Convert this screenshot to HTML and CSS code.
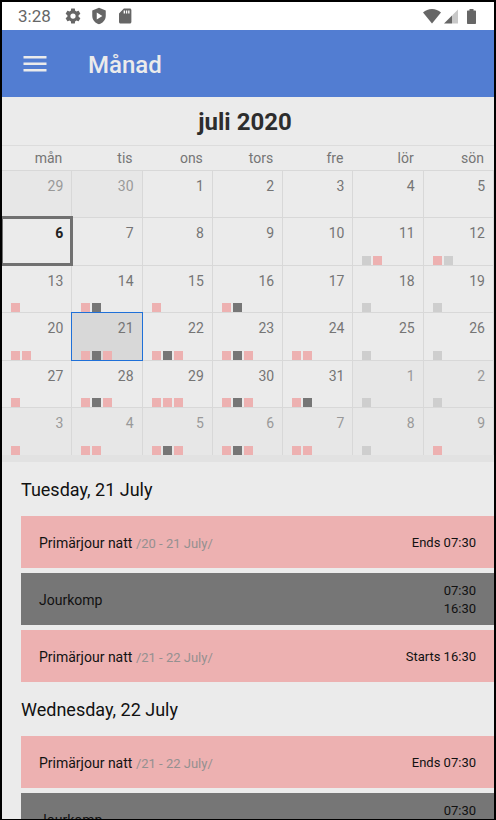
FILE: index.html
```html
<!DOCTYPE html>
<html lang="sv">
<head>
<meta charset="utf-8">
<meta name="viewport" content="width=device-width, initial-scale=1">
<title>Månad</title>
<link rel="stylesheet" href="styles.css">
</head>
<body>
<div class="status">
  <span class="clock">3:28</span>
  <svg class="status-icon" viewBox="0 0 24 24" aria-hidden="true"><path fill-rule="evenodd" d="M19.43 12.98c.04-.32.07-.64.07-.98s-.03-.66-.07-.98l2.11-1.65c.19-.15.24-.42.12-.64l-2-3.46c-.12-.22-.39-.3-.61-.22l-2.49 1c-.52-.4-1.08-.73-1.69-.98l-.38-2.65C14.46 2.18 14.25 2 14 2h-4c-.25 0-.46.18-.49.42l-.38 2.65c-.61.25-1.17.59-1.69.98l-2.49-1c-.23-.09-.49 0-.61.22l-2 3.46c-.13.22-.07.49.12.64l2.11 1.65c-.04.32-.07.65-.07.98s.03.66.07.98l-2.11 1.65c-.19.15-.24.42-.12.64l2 3.46c.12.22.39.3.61.22l2.49-1c.52.4 1.08.73 1.69.98l.38 2.65c.03.24.24.42.49.42h4c.25 0 .46-.18.49-.42l.38-2.65c.61-.25 1.17-.59 1.69-.98l2.49 1c.23.09.49 0 .61-.22l2-3.46c.12-.22.07-.49-.12-.64l-2.11-1.65zM12 15.5a3.5 3.5 0 1 1 0-7 3.5 3.5 0 0 1 0 7z"/></svg>
  <svg class="status-icon" viewBox="0 0 24 24" aria-hidden="true"><path fill-rule="evenodd" d="M12 1 3 4.500v7c0 5.500 3.800 9.700 9 11.500 5.200-1.800 9-6 9-11.500v-7zM9 7.300 16.500 12 9 16.700z"/></svg>
  <svg class="status-icon" viewBox="0 0 24 24" aria-hidden="true"><path fill-rule="evenodd" d="M18.500 2h-8L4 8.500V20c0 1.100.9 2 2 2h12.500c1.100 0 2-.9 2-2V4c0-1.100-.9-2-2-2zM12 8.500h-1.800v-4H12zm3 0h-1.800v-4H15zm3 0h-1.800v-4H18z"/></svg>
  <span class="signals">
    <svg class="wifi" viewBox="0 0 18 15" aria-hidden="true"><path d="M0 3.500C2.500 1.300 5.600 0 9 0s6.500 1.300 9 3.500L9 14.500z"/></svg>
    <svg class="cell" viewBox="0 0 14 15" aria-hidden="true"><path class="faint" d="M8 6.500 14 .5v14H8z"/><path d="M0 14.500 8 6.500v8z"/></svg>
    <svg class="battery" viewBox="0 0 9 15" aria-hidden="true"><path d="M2.500 1.500V0h4v1.500H8c.6 0 1 .4 1 1V14c0 .6-.4 1-1 1H1c-.6 0-1-.4-1-1V2.500c0-.6.4-1 1-1z"/></svg>
  </span>
</div>
<header class="appbar">
  <button class="menu" type="button" aria-label="Meny"><svg viewBox="0 0 24 16" aria-hidden="true"><path d="M.5 0h23v2.500H.5zM.5 6.500h23V9H.5zM.5 13h23v2.500H.5z"/></svg></button>
  <h1>Månad</h1>
</header>
<main class="content">
  <section class="calendar">
    <h2>juli 2020</h2>
    <table>
      <thead><tr><th>mån</th><th>tis</th><th>ons</th><th>tors</th><th>fre</th><th>lör</th><th>sön</th></tr></thead>
      <tbody>
        <tr>
          <td class="other"><button type="button">29</button></td>
          <td class="other"><button type="button">30</button></td>
          <td><button type="button">1</button></td>
          <td><button type="button">2</button></td>
          <td><button type="button">3</button></td>
          <td><button type="button">4</button></td>
          <td><button type="button">5</button></td>
        </tr>
        <tr>
          <td class="today"><button type="button">6</button></td>
          <td><button type="button">7</button></td>
          <td><button type="button">8</button></td>
          <td><button type="button">9</button></td>
          <td><button type="button">10</button></td>
          <td><button type="button">11<span class="dots"><i class="free"></i><i class="duty"></i></span></button></td>
          <td><button type="button">12<span class="dots"><i class="duty"></i><i class="free"></i></span></button></td>
        </tr>
        <tr>
          <td><button type="button">13<span class="dots"><i class="duty"></i></span></button></td>
          <td><button type="button">14<span class="dots"><i class="duty"></i><i class="comp"></i></span></button></td>
          <td><button type="button">15<span class="dots"><i class="duty"></i></span></button></td>
          <td><button type="button">16<span class="dots"><i class="duty"></i><i class="comp"></i></span></button></td>
          <td><button type="button">17</button></td>
          <td><button type="button">18<span class="dots"><i class="free"></i></span></button></td>
          <td><button type="button">19<span class="dots"><i class="free"></i></span></button></td>
        </tr>
        <tr>
          <td><button type="button">20<span class="dots"><i class="duty"></i><i class="duty"></i></span></button></td>
          <td class="selected"><button type="button">21<span class="dots"><i class="duty"></i><i class="comp"></i><i class="duty"></i></span></button></td>
          <td><button type="button">22<span class="dots"><i class="duty"></i><i class="comp"></i><i class="duty"></i></span></button></td>
          <td><button type="button">23<span class="dots"><i class="duty"></i><i class="comp"></i><i class="duty"></i></span></button></td>
          <td><button type="button">24<span class="dots"><i class="duty"></i><i class="duty"></i></span></button></td>
          <td><button type="button">25<span class="dots"><i class="free"></i></span></button></td>
          <td><button type="button">26<span class="dots"><i class="free"></i></span></button></td>
        </tr>
        <tr>
          <td><button type="button">27<span class="dots"><i class="duty"></i></span></button></td>
          <td><button type="button">28<span class="dots"><i class="duty"></i><i class="comp"></i><i class="duty"></i></span></button></td>
          <td><button type="button">29<span class="dots"><i class="duty"></i><i class="duty"></i><i class="duty"></i></span></button></td>
          <td><button type="button">30<span class="dots"><i class="duty"></i><i class="comp"></i><i class="duty"></i></span></button></td>
          <td><button type="button">31<span class="dots"><i class="duty"></i><i class="comp"></i></span></button></td>
          <td class="other"><button type="button">1<span class="dots"><i class="free"></i></span></button></td>
          <td class="other"><button type="button">2<span class="dots"><i class="free"></i></span></button></td>
        </tr>
        <tr>
          <td class="other"><button type="button">3<span class="dots"><i class="duty"></i></span></button></td>
          <td class="other"><button type="button">4<span class="dots"><i class="duty"></i><i class="duty"></i></span></button></td>
          <td class="other"><button type="button">5<span class="dots"><i class="duty"></i><i class="comp"></i><i class="duty"></i></span></button></td>
          <td class="other"><button type="button">6<span class="dots"><i class="duty"></i><i class="comp"></i><i class="duty"></i></span></button></td>
          <td class="other"><button type="button">7<span class="dots"><i class="duty"></i><i class="duty"></i></span></button></td>
          <td class="other"><button type="button">8<span class="dots"><i class="free"></i></span></button></td>
          <td class="other"><button type="button">9<span class="dots"><i class="duty"></i></span></button></td>
        </tr>
      </tbody>
    </table>
  </section>
  <section class="agenda">
    <h3>Tuesday, 21 July</h3>
    <ul>
      <li class="duty"><span class="name">Primärjour natt <small>/20 - 21 July/</small></span><span class="time">Ends 07:30</span></li>
      <li class="comp"><span class="name">Jourkomp</span><span class="time">07:30<br>16:30</span></li>
      <li class="duty"><span class="name">Primärjour natt <small>/21 - 22 July/</small></span><span class="time">Starts 16:30</span></li>
    </ul>
    <h3>Wednesday, 22 July</h3>
    <ul>
      <li class="duty"><span class="name">Primärjour natt <small>/21 - 22 July/</small></span><span class="time">Ends 07:30</span></li>
      <li class="comp"><span class="name">Jourkomp</span><span class="time">07:30<br>16:30</span></li>
    </ul>
  </section>
</main>
</body>
</html>
```
FILE: styles.css
```css
* {
  box-sizing: border-box;
}

body {
  display: flex;
  flex-direction: column;
  height: 100vh;
  margin: 0;
  border: 2px solid #000;
  border-bottom-width: 1px;
  background: #ebebeb;
  color: #111;
  font-family: Roboto, "Liberation Sans", sans-serif;
  overflow: hidden;
}

h1, h2, h3, ul {
  margin: 0;
  padding: 0;
}

button {
  border: 0;
  background: none;
  color: inherit;
  font: inherit;
}

/* Status bar */
.status {
  display: flex;
  flex: none;
  align-items: center;
  gap: 8px;
  height: 28px;
  padding: 0 18px 0 16px;
  background: #fff;
  color: #666;
  fill: #666;
}

.clock {
  margin-right: 5px;
  font-size: 17px;
  line-height: 28px;
}

.status-icon {
  width: 18px;
  height: 18px;
}

.signals {
  display: flex;
  align-items: center;
  margin-left: auto;
}

.wifi {
  width: 18px;
  height: 15px;
  margin-right: 3px;
}

.cell {
  width: 14px;
  height: 15px;
  margin-right: 9px;
}

.faint {
  fill: #c8c8c8;
}

.battery {
  width: 9px;
  height: 15px;
}

/* App bar */
.appbar {
  display: flex;
  flex: none;
  align-items: center;
  height: 67px;
  padding: 0 21px;
  background: #527dd2;
  color: #ebebeb;
}

.appbar h1 {
  margin-left: 41px;
  padding-top: 2px;
  font-size: 24px;
  font-weight: 500;
  line-height: 32px;
}

.menu {
  display: flex;
  padding: 0;
  fill: #ebebeb;
}

.menu svg {
  width: 24px;
  height: 16px;
}

.content {
  flex: 1;
  min-height: 0;
  overflow: hidden;
}

/* Calendar */
.calendar {
  border-bottom: 7px solid #e2e2e2;
  overflow: hidden;
}

.calendar h2 {
  height: 48px;
  padding: 1px 6px 0 0;
  color: #2d2d2d;
  font-size: 24px;
  font-weight: 700;
  line-height: 48px;
  text-align: center;
}

table {
  width: 100%;
  border-spacing: 0;
  color: #757575;
  font-size: 14px;
  table-layout: fixed;
}

th {
  height: 25px;
  padding: 0 10px 0 0;
  border-top: 1px solid #dcdcdc;
  font-weight: 400;
  line-height: 24px;
  text-align: right;
}

td {
  position: relative;
  height: 47px;
  padding: 0;
  border-top: 1px solid #d8d8d8;
  border-right: 1px solid #d8d8d8;
}

tr:nth-child(even) td {
  height: 48px;
}

td button {
  display: flex;
  flex-direction: column;
  align-items: flex-end;
  justify-content: space-between;
  width: 100%;
  height: 100%;
  padding: 7px 8px 0 9px;
  line-height: 16px;
}

.dots {
  display: flex;
  align-self: flex-start;
  gap: 2px;
}

.dots i {
  width: 9px;
  height: 9px;
}

.duty {
  background: #edb1b1;
}

.comp {
  background: #767676;
}

.free {
  background: #cecece;
}

.other {
  background: #e7e7e7;
  color: #999;
}

.today {
  color: #222;
  font-weight: 700;
}

.selected {
  background: #d8d8d8;
}

.today::after,
.selected::after {
  position: absolute;
  z-index: 1;
  inset: -1px -1px -1px -1px;
  border: 1px solid #1f70d8;
  content: "";
  pointer-events: none;
}

.today::after {
  inset: -2px -2px -1px -2px;
  border: 3px solid #707070;
}

/* Agenda */
.agenda h3 {
  height: 54px;
  padding-left: 19px;
  font-size: 18px;
  font-weight: 400;
  line-height: 56px;
}

.agenda ul {
  display: flex;
  flex-direction: column;
  gap: 5px;
  padding-left: 19px;
  list-style: none;
}

.agenda li {
  display: flex;
  align-items: center;
  justify-content: space-between;
  min-height: 52px;
  padding: 2px 18px 0;
}

.name {
  font-size: 14px;
  line-height: 18px;
}

.name small {
  color: #949090;
  font-size: 13px;
}

.time {
  font-size: 13px;
  line-height: 18px;
  text-align: right;
}
```
